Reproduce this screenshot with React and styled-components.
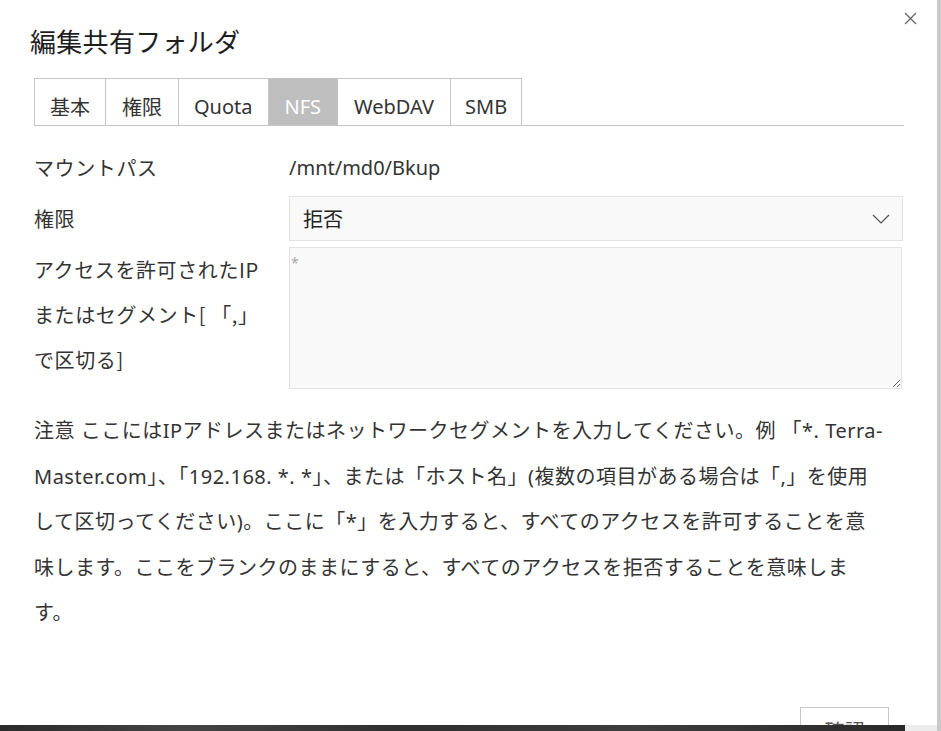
import React from "react";
import styled, { createGlobalStyle } from "styled-components";

const GlobalStyle = createGlobalStyle`
  html, body { margin: 0; padding: 0; background: #fff; overflow: hidden; }
  * { box-sizing: border-box; }
  body { font-family: "Noto Sans", "Noto Sans CJK JP", sans-serif; }
`;

const Page = styled.div`
  width: 941px;
  height: 731px;
  display: flex;
  overflow: hidden;
`;

const MainCol = styled.div`
  width: 937px;
  display: flex;
  flex-direction: column;
`;

const ScrollEdge = styled.div`
  width: 4px;
  height: 100%;
  background: #cacaca;
`;

const Dialog = styled.div`
  position: relative;
  height: 725px;
  flex: none;
  background: #fff;
  overflow: hidden;
  padding: 0 33px 0 34px;
  color: #333;
  font-family: "Noto Sans", "Noto Sans CJK JP", sans-serif;
`;

const Desk = styled.div`
  flex: 1;
  display: flex;
`;

const DeskDark = styled.div`
  width: 905px;
  background: linear-gradient(90deg, #2b2b2b, #444 20%, #2f2f2f 45%, #3d3d3d 70%, #2a2a2a);
`;

const DeskLight = styled.div`
  flex: 1;
  background: #ececec;
`;

const Close = styled.button`
  position: absolute;
  top: 9px;
  right: 18px;
  width: 18px;
  height: 18px;
  padding: 0;
  border: none;
  background: transparent;
  display: flex;
  align-items: center;
  justify-content: center;
`;

const Title = styled.h1`
  margin: 0 0 0 -4px;
  padding-top: 23px;
  height: 78px;
  font-size: 26px;
  line-height: 36px;
  font-weight: 400;
  color: #1e1e1e;
  letter-spacing: 0.3px;
  font-family: "Noto Sans CJK JP", sans-serif;
`;

const TabBar = styled.div`
  display: flex;
  width: 870px;
  border-bottom: 1px solid #c4c4c4;
`;

const Tab = styled.div`
  height: 47px;
  padding: 8px ${(p) => p.$pad}px 0;
  display: flex;
  align-items: center;
  font-size: 20px;
  color: ${(p) => (p.$active ? "#fff" : "#333")};
  background: ${(p) => (p.$active ? "#bebebe" : "#fff")};
  border-top: 1px solid #c4c4c4;
  border-left: 1px solid #c4c4c4;
  &:last-child { border-right: 1px solid #c4c4c4; }
`;

const Form = styled.div`
  display: grid;
  grid-template-columns: 255px 614px;
  row-gap: 6px;
  margin-top: 19px;
`;

const Label = styled.div`
  font-size: 20px;
  line-height: 45px;
  color: #333;
  letter-spacing: 0.6px;
  font-family: "Noto Sans CJK JP", sans-serif;
`;

const Value = styled.div`
  font-size: 20px;
  line-height: 45px;
  color: #333;
`;

const Select = styled.div`
  height: 45px;
  background: #f9f9f9;
  border: 1px solid #e3e3e3;
  display: flex;
  align-items: center;
  justify-content: space-between;
  padding: 0 12px 0 13px;
  font-size: 20px;
  color: #222;
  font-family: "Noto Sans CJK JP", sans-serif;
`;

const Area = styled.textarea`
  width: 613px;
  height: 142px;
  background: #f9f9f9;
  border: 1px solid #e3e3e3;
  padding: 5px 1px;
  font-size: 14px;
  font-family: "Noto Sans", sans-serif;
  color: #333;
  outline: none;
  display: block;
  &::placeholder { color: #a8a8a8; }
`;

const Note = styled.p`
  margin: 19px 0 0;
  font-size: 20px;
  line-height: 45.5px;
  color: #333;
  letter-spacing: 0.5px;
  white-space: nowrap;
  font-family: "Noto Sans", "Noto Sans CJK JP", sans-serif;
`;

const Footer = styled.div`
  display: flex;
  justify-content: flex-end;
  margin-top: 71px;
  padding-right: 15px;
`;

const Button = styled.button`
  width: 89px;
  height: 45px;
  background: #fff;
  border: 1px solid #c8c8c8;
  font-size: 20px;
  color: #555;
  font-family: "Noto Sans CJK JP", sans-serif;
  padding: 0;
  padding-top: 2px;
`;

const tabs = [
  { t: "基本", pad: 15 },
  { t: "権限", pad: 16 },
  { t: "Quota", pad: 15 },
  { t: "NFS", pad: 16 },
  { t: "WebDAV", pad: 16 },
  { t: "SMB", pad: 14 },
];

export default function App() {
  return (
    <>
      <GlobalStyle />
      <Page>
        <MainCol>
          <Dialog>
            <Close aria-label="close">
              <svg width="13" height="13" viewBox="0 0 13 13">
                <path d="M1 1 L12 12 M12 1 L1 12" stroke="#666" strokeWidth="1.3" fill="none" />
              </svg>
            </Close>
            <Title>編集共有フォルダ</Title>
            <TabBar>
              {tabs.map((x) => (
                <Tab key={x.t} $pad={x.pad} $active={x.t === "NFS"}>
                  {x.t}
                </Tab>
              ))}
            </TabBar>
            <Form>
              <Label>マウントパス</Label>
              <Value>/mnt/md0/Bkup</Value>
              <Label>権限</Label>
              <Select>
                <span>拒否</span>
                <svg width="18" height="10" viewBox="0 0 18 10">
                  <polyline points="1,1 9,9 17,1" stroke="#555" strokeWidth="1.2" fill="none" />
                </svg>
              </Select>
              <Label>
                アクセスを許可されたIP
                <br />
                またはセグメント[ 「,」
                <br />
                で区切る]
              </Label>
              <Area placeholder="*" readOnly />
            </Form>
            <Note>
              注意 ここにはIPアドレスまたはネットワークセグメントを入力してください。例 「*. Terra-
              <br />
              Master.com」、「192.168. *. *」、または「ホスト名」(複数の項目がある場合は「,」を使用
              <br />
              して区切ってください)。ここに「*」を入力すると、すべてのアクセスを許可することを意
              <br />
              味します。ここをブランクのままにすると、すべてのアクセスを拒否することを意味しま
              <br />
              す。
            </Note>
            <Footer>
              <Button>確認</Button>
            </Footer>
          </Dialog>
          <Desk>
            <DeskDark />
            <DeskLight />
          </Desk>
        </MainCol>
        <ScrollEdge />
      </Page>
    </>
  );
}
